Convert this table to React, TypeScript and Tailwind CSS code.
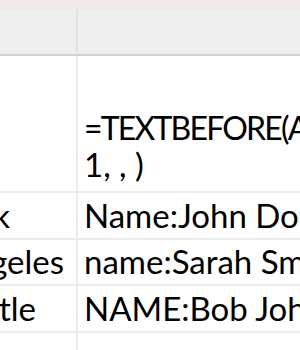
const rows = [
  { city: "New York", pad: "pr-[66px]", value: "Name:John Doe" },
  { city: "Los Angeles", pad: "pr-[12px]", value: "name:Sarah Smith" },
  { city: "Seattle", pad: "pr-[40px]", value: "NAME:Bob Johnson" },
];

export default function App() {
  return (
    <div className="w-[300px] h-[350px] overflow-hidden bg-white text-black font-['Lato',sans-serif] text-[33px] leading-none">
      {/* window strip */}
      <div className="h-[9px] bg-[#f1e7e7]" />

      {/* column headers */}
      <div className="flex h-[47px] bg-[#efefef] border-b-2 border-[#d2d2d2]">
        <div className="w-[78px] shrink-0 border-r-2 border-[#e2e2e2]" />
        <div className="flex-1" />
      </div>

      {/* formula row */}
      <div className="flex h-[137px] border-b-2 border-[#ececec]">
        <div className="w-[78px] shrink-0 border-r-2 border-[#ececec]" />
        <div className="flex-1 flex flex-col justify-end pl-[6px] pb-[9px] whitespace-nowrap overflow-hidden leading-[36px]">
          <div className="text-[32px] tracking-[-1.8px]">=TEXTBEFORE(A2, ":",</div>
          <div>1, , )</div>
        </div>
      </div>

      {rows.map((r) => (
        <div key={r.city} className="flex h-[46.5px] border-b-2 border-[#ececec]">
          <div
            className={`w-[78px] shrink-0 border-r-2 border-[#ececec] flex items-center justify-end overflow-hidden whitespace-nowrap ${r.pad}`}
          >
            <span>{r.city}</span>
          </div>
          <div className="flex-1 flex items-center pl-[6px] whitespace-nowrap overflow-hidden">
            {r.value}
          </div>
        </div>
      ))}

      <div className="flex h-[40px]">
        <div className="w-[78px] shrink-0 border-r-2 border-[#ececec]" />
        <div className="flex-1" />
      </div>
    </div>
  );
}
